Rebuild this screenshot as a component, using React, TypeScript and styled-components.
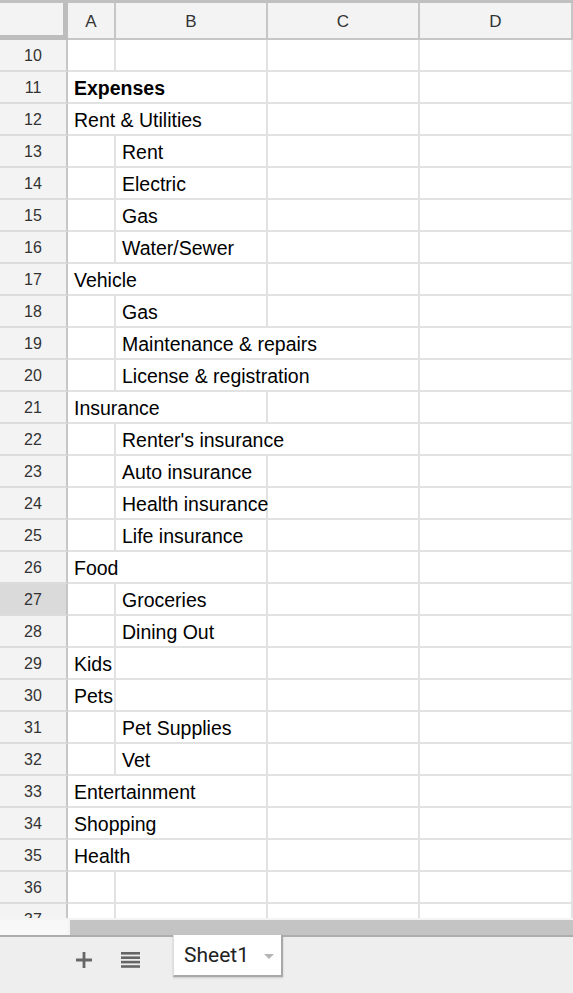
import styled, { createGlobalStyle } from "styled-components";

const GlobalStyle = createGlobalStyle`
  html, body {
    margin: 0;
    padding: 0;
    background: #ffffff;
    overflow: hidden;
  }
  body {
    font-family: "Liberation Sans", Arial, sans-serif;
  }
`;

const Page = styled.div`
  width: 573px;
  height: 993px;
  display: flex;
  flex-direction: column;
  overflow: hidden;
`;

const COLS = "68px 48px 152px 152px 1fr";

const HeaderRow = styled.div`
  display: grid;
  grid-template-columns: ${COLS};
  border-top: 3px solid #c0c0c0;
  height: 40px;
  flex-shrink: 0;
  box-sizing: border-box;
`;

const Corner = styled.div`
  background: #f3f3f3;
  border-right: 5px solid #bdbdbd;
  border-bottom: 5px solid #bdbdbd;
`;

const ColHead = styled.div`
  background: #f3f3f3;
  border-right: 2px solid #c6c6c6;
  border-bottom: 2px solid #c6c6c6;
  display: flex;
  align-items: center;
  justify-content: center;
  font-size: 17px;
  color: #333;
  padding-top: 3px;
`;

const Body = styled.div`
  flex: 1;
  overflow: hidden;
`;

const Row = styled.div`
  display: grid;
  grid-template-columns: ${COLS};
  height: 32px;
`;

const RowHead = styled.div<{ $selected?: boolean }>`
  background: ${(p) => (p.$selected ? "#dadada" : "#f3f3f3")};
  border-right: 2px solid #c6c6c6;
  border-bottom: 2px solid #dcdcdc;
  display: flex;
  align-items: center;
  justify-content: center;
  padding-top: 2px;
  font-size: 16px;
  color: #333;
`;

const Cell = styled.div<{ $span?: number; $bold?: boolean }>`
  grid-column: span ${(p) => p.$span ?? 1};
  border-right: 2px solid #e2e2e2;
  border-bottom: 2px solid #e2e2e2;
  display: flex;
  align-items: center;
  padding: 2px 0 0 6px;
  font-size: 19.5px;
  font-weight: ${(p) => (p.$bold ? 700 : 400)};
  color: #000;
  white-space: nowrap;
  min-width: 0;
`;

const ScrollRow = styled.div`
  display: flex;
  height: 17px;
  flex-shrink: 0;
  border-top: 2px solid #f4f4f4;
  box-sizing: border-box;
`;

const ScrollCorner = styled.div`
  width: 68px;
  background: #f8f8f8;
  border-right: 2px solid #f4f4f4;
`;

const ScrollTrack = styled.div`
  flex: 1;
  background: #c4c4c4;
`;

const TabBar = styled.div`
  height: 58px;
  flex-shrink: 0;
  box-sizing: border-box;
  border-top: 2px solid #adadad;
  background: #eeeeee;
  display: flex;
  align-items: flex-start;
  padding-left: 68px;
`;

const IconButton = styled.div<{ $gap?: number }>`
  width: 32px;
  height: 46px;
  margin-left: ${(p) => p.$gap ?? 0}px;
  display: flex;
  align-items: center;
  justify-content: center;
  color: #666;
`;

const SheetTab = styled.div`
  margin-left: 27px;
  margin-top: -2px;
  width: 110px;
  height: 42px;
  box-sizing: border-box;
  background: #ffffff;
  border-left: 1px solid #dddddd;
  border-right: 2px solid #a8a8a8;
  border-bottom: 2px solid #a8a8a8;
  box-shadow: 0 1px 2px rgba(0, 0, 0, 0.15);
  display: flex;
  align-items: center;
  padding-left: 10px;
  font-family: Roboto, "Liberation Sans", sans-serif;
  font-size: 21px;
  color: #222;
`;

const Caret = styled.span`
  margin-left: 15px;
  width: 0;
  height: 0;
  border-left: 5px solid transparent;
  border-right: 5px solid transparent;
  border-top: 5px solid #b5b5b5;
  margin-top: 2px;
`;

type RowData = {
  n: number;
  a?: string;
  b?: string;
  span?: number;
  bold?: boolean;
};

const rows: RowData[] = [
  { n: 10 },
  { n: 11, a: "Expenses", span: 2, bold: true },
  { n: 12, a: "Rent & Utilities", span: 2 },
  { n: 13, b: "Rent" },
  { n: 14, b: "Electric" },
  { n: 15, b: "Gas" },
  { n: 16, b: "Water/Sewer" },
  { n: 17, a: "Vehicle", span: 2 },
  { n: 18, b: "Gas" },
  { n: 19, b: "Maintenance & repairs", span: 2 },
  { n: 20, b: "License & registration", span: 2 },
  { n: 21, a: "Insurance", span: 2 },
  { n: 22, b: "Renter's insurance", span: 2 },
  { n: 23, b: "Auto insurance" },
  { n: 24, b: "Health insurance" },
  { n: 25, b: "Life insurance" },
  { n: 26, a: "Food", span: 2 },
  { n: 27, b: "Groceries" },
  { n: 28, b: "Dining Out" },
  { n: 29, a: "Kids" },
  { n: 30, a: "Pets" },
  { n: 31, b: "Pet Supplies" },
  { n: 32, b: "Vet" },
  { n: 33, a: "Entertainment", span: 2 },
  { n: 34, a: "Shopping", span: 2 },
  { n: 35, a: "Health", span: 2 },
  { n: 36 },
  { n: 37 },
];

const renderCells = (r: RowData) => {
  const span = r.span ?? 1;
  if (r.a !== undefined) {
    const rest = 4 - span;
    return (
      <>
        <Cell $span={span} $bold={r.bold}>
          {r.a}
        </Cell>
        {Array.from({ length: rest }).map((_, i) => (
          <Cell key={i} />
        ))}
      </>
    );
  }
  if (r.b !== undefined) {
    const rest = 3 - span;
    return (
      <>
        <Cell />
        <Cell $span={span}>{r.b}</Cell>
        {Array.from({ length: rest }).map((_, i) => (
          <Cell key={i} />
        ))}
      </>
    );
  }
  return (
    <>
      <Cell />
      <Cell />
      <Cell />
      <Cell />
    </>
  );
};

const PlusIcon = () => (
  <svg width="16" height="16" viewBox="0 0 16 16">
    <path d="M8 0v16M0 8h16" stroke="currentColor" strokeWidth="2.8" />
  </svg>
);

const ListIcon = () => (
  <svg width="19" height="16" viewBox="0 0 19 16">
    <rect x="0" y="0" width="19" height="2.6" fill="currentColor" />
    <rect x="0" y="4.4" width="19" height="2.6" fill="currentColor" />
    <rect x="0" y="8.8" width="19" height="2.6" fill="currentColor" />
    <rect x="0" y="13.2" width="19" height="2.6" fill="currentColor" />
  </svg>
);

export default function App() {
  return (
    <>
      <GlobalStyle />
      <Page>
        <HeaderRow>
          <Corner />
          <ColHead>A</ColHead>
          <ColHead>B</ColHead>
          <ColHead>C</ColHead>
          <ColHead>D</ColHead>
        </HeaderRow>
        <Body>
          {rows.map((r) => (
            <Row key={r.n}>
              <RowHead $selected={r.n === 27}>{r.n}</RowHead>
              {renderCells(r)}
            </Row>
          ))}
        </Body>
        <ScrollRow>
          <ScrollCorner />
          <ScrollTrack />
        </ScrollRow>
        <TabBar>
          <IconButton>
            <PlusIcon />
          </IconButton>
          <IconButton $gap={14}>
            <ListIcon />
          </IconButton>
          <SheetTab>
            Sheet1
            <Caret />
          </SheetTab>
        </TabBar>
      </Page>
    </>
  );
}
